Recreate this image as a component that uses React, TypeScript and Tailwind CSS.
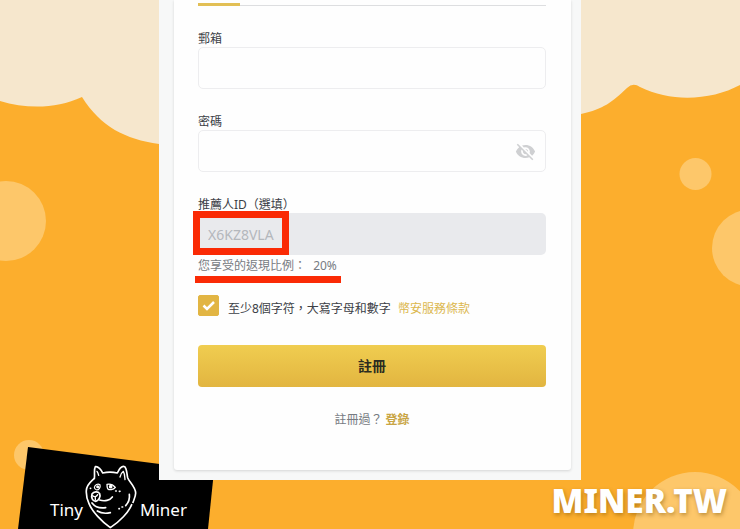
import { useState } from "react";
import type { ReactNode } from "react";
import { MdVisibilityOff } from "react-icons/md";

interface FieldProps {
  id: string;
  label: string;
  children: ReactNode;
}

function Field({ id, label, children }: FieldProps) {
  return (
    <div className="mt-[25px]">
      <label htmlFor={id} className="block text-xs leading-4 text-[#3c4046]">
        {label}
      </label>
      <div className="relative">{children}</div>
    </div>
  );
}

// clouds and bubbles behind everything
function Backdrop() {
  return (
    <svg
      className="absolute inset-0 h-full w-full"
      viewBox="0 0 740 529"
      preserveAspectRatio="xMidYMid slice"
      aria-hidden="true"
    >
      <path
        d="M0 0H740V85C712 100 672 103 640 87Q633 82 627 88C612 102 604 109 581 114L400 150L159 144C125 139 101 127 82 97C56 109 27 109 0 101Z"
        fill="#f6e7cd"
      />
      <g fill="#fdc76a">
        <circle cx="6" cy="221" r="40" />
        <circle cx="29" cy="455" r="15" />
        <circle cx="695.5" cy="174" r="16" />
        <circle cx="750.5" cy="248" r="38.5" />
        <circle cx="695" cy="534" r="62" />
      </g>
    </svg>
  );
}

function DogLogo() {
  return (
    <svg
      className="h-[64px] w-[52px] shrink-0"
      viewBox="76 32 156 192"
      fill="none"
      stroke="#fff"
      strokeWidth="5"
      strokeLinecap="round"
      strokeLinejoin="round"
      aria-hidden="true"
    >
      <path d="M104 72C106 64 102 45 107 37C115 35 125 46 129 56C142 53 160 53 173 56C178 45 187 34 195 37C202 44 201 58 204 70C208 82 228 98 228 116C228 126 223 136 220 144" />
      <path d="M104 72C94 82 81 90 80 108C79 122 83 137 88 148C97 171 127 203 152 220C180 202 207 174 216 151" />
      <path d="M112 51C115 55 116 59 117 63" strokeWidth="4" />
      <path d="M181 68C183 60 187 54 191 51C195 57 195 66 196 76" strokeWidth="4" />
      <path d="M104 99C106 91 114 87 121 91C123 99 118 107 111 107C107 106 104 103 104 99Z" strokeWidth="3.5" />
      <path d="M142 90C151 88 161 92 167 99C161 107 149 108 144 103C142 99 142 94 142 90Z" strokeWidth="4" />
      <circle cx="114" cy="97" r="2" fill="#fff" />
      <circle cx="153" cy="97" r="3" fill="#fff" />
      <path d="M97 119C102 111 115 110 120 118C124 127 117 139 108 141C98 140 94 129 97 119Z" strokeWidth="5" />
      <path d="M99 124C104 129 111 127 114 121M107 129V137" strokeWidth="4" />
      <path d="M120 137C135 142 151 138 158 128" strokeWidth="5" />
      <path d="M97 146C106 158 119 163 138 160" strokeWidth="5" />
      <path d="M113 170C124 177 138 178 152 175" strokeWidth="5" />
      <path d="M209 120C211 133 206 145 198 154" strokeWidth="5" />
      <path d="M92 102H93M168 110H170M179 111H181M187 158H189M178 163H179" strokeWidth="5" />
    </svg>
  );
}

function Brand() {
  return (
    <div className="absolute bottom-0 left-[18px] h-[82px] w-[196px]">
      <svg className="absolute inset-0 h-full w-full" viewBox="0 0 196 82" aria-hidden="true">
        <path d="M10 0L196 24L190 82H0Z" fill="#000" />
      </svg>
      <div className="relative flex h-full items-end pl-8 text-[17px] leading-6 text-white">
        <span className="w-[35px] pb-[7px]">Tiny</span>
        <DogLogo />
        <span className="pb-[7px] pl-[3px]">Miner</span>
      </div>
    </div>
  );
}

const inputBase = "block h-[42px] w-full rounded-[5px] px-[10px] text-sm outline-none";

export default function App() {
  const [email, setEmail] = useState("");
  const [password, setPassword] = useState("");
  const [showPassword, setShowPassword] = useState(false);
  const [agreed, setAgreed] = useState(true);

  return (
    <div
      lang="zh-TW"
      className="relative min-h-screen overflow-hidden bg-[#fcae2d] font-['Noto_Sans','Noto_Sans_CJK_TC',sans-serif]"
    >
      <Backdrop />
      <Brand />

      <main className="relative mx-auto mb-[49px] w-full max-w-[422px] bg-[#f7f8f8] pr-[10px] pb-[10px] pl-[15px]">
        <form
          className="rounded-b-[3px] bg-[#fefefe] pr-[25px] pb-[42px] pl-6 shadow-[0_1px_3px_rgba(0,0,0,0.14)]"
          onSubmit={(e) => e.preventDefault()}
        >
          {/* active tab marker */}
          <div className="flex h-[6px] items-end border-b border-[#dddee0]">
            <span className="-mb-px h-[3px] w-[42px] bg-[#e2bf55]" />
          </div>

          <Field id="email" label="郵箱">
            <input
              id="email"
              type="email"
              value={email}
              onChange={(e) => setEmail(e.target.value)}
              className={`${inputBase} border border-[#ededef] bg-[#fefefe]`}
            />
          </Field>

          <Field id="password" label="密碼">
            <input
              id="password"
              type={showPassword ? "text" : "password"}
              value={password}
              onChange={(e) => setPassword(e.target.value)}
              className={`${inputBase} border border-[#ededef] bg-[#fefefe]`}
            />
            <button
              type="button"
              aria-label="顯示密碼"
              onClick={() => setShowPassword(!showPassword)}
              className="absolute inset-y-0 right-[10px] flex items-center text-[#cfd0d2]"
            >
              <MdVisibilityOff size={21} />
            </button>
          </Field>

          <Field id="referral" label="推薦人ID（選填）">
            <input
              id="referral"
              type="text"
              value="X6KZ8VLA"
              readOnly
              className={`${inputBase} bg-[#e9eaed] text-[#b4b7bc]`}
            />
            <span className="pointer-events-none absolute -top-[2px] -left-[5px] h-[44px] w-[96px] border-[7px] border-[#fa2a05]" />
          </Field>

          <p className="relative mt-[3px] text-xs leading-4 text-[#777b82]">
            您享受的返現比例： <span className="ml-1">20%</span>
            <span className="absolute top-[18px] -left-[3px] h-[7px] w-[146px] bg-[#fa2a05]" />
          </p>

          <div className="mt-[21px] flex items-end">
            <span className="relative h-[21px] w-[21px] shrink-0">
              <input
                id="terms"
                type="checkbox"
                checked={agreed}
                onChange={(e) => setAgreed(e.target.checked)}
                className="block h-full w-full appearance-none rounded-[2px] border border-[#e2b543] checked:bg-[#e2b543]"
              />
              {agreed && (
                <svg
                  className="pointer-events-none absolute inset-0"
                  viewBox="0 0 21 21"
                  fill="none"
                  stroke="#fff"
                  strokeWidth="2.5"
                  aria-hidden="true"
                >
                  <path d="M5.5 10.5L9 14L16 7" />
                </svg>
              )}
            </span>
            <p className="ml-[9px] text-xs leading-[14px] text-[#3c4046]">
              <label htmlFor="terms">至少8個字符，大寫字母和數字</label>{" "}
              <a href="#terms" className="ml-1 text-[#dcb84f]">幣安服務條款</a>
            </p>
          </div>

          <button
            type="submit"
            className="mt-[29px] block h-[42px] w-full rounded-[4px] bg-linear-to-b from-[#f0cd50] to-[#e2b540] text-sm font-bold text-[#2c2c20]"
          >
            註冊
          </button>

          <p className="mt-[25px] text-center text-xs leading-4 text-[#777b82]">
            註冊過？ <a href="#login" className="font-bold text-[#c9a544]">登錄</a>
          </p>
        </form>
      </main>

      <p className="absolute right-[13px] bottom-[8px] text-[33px] leading-10 font-black text-white [text-shadow:1px_2px_4px_rgba(110,70,0,0.45)]">
        MINER.TW
      </p>
    </div>
  );
}
